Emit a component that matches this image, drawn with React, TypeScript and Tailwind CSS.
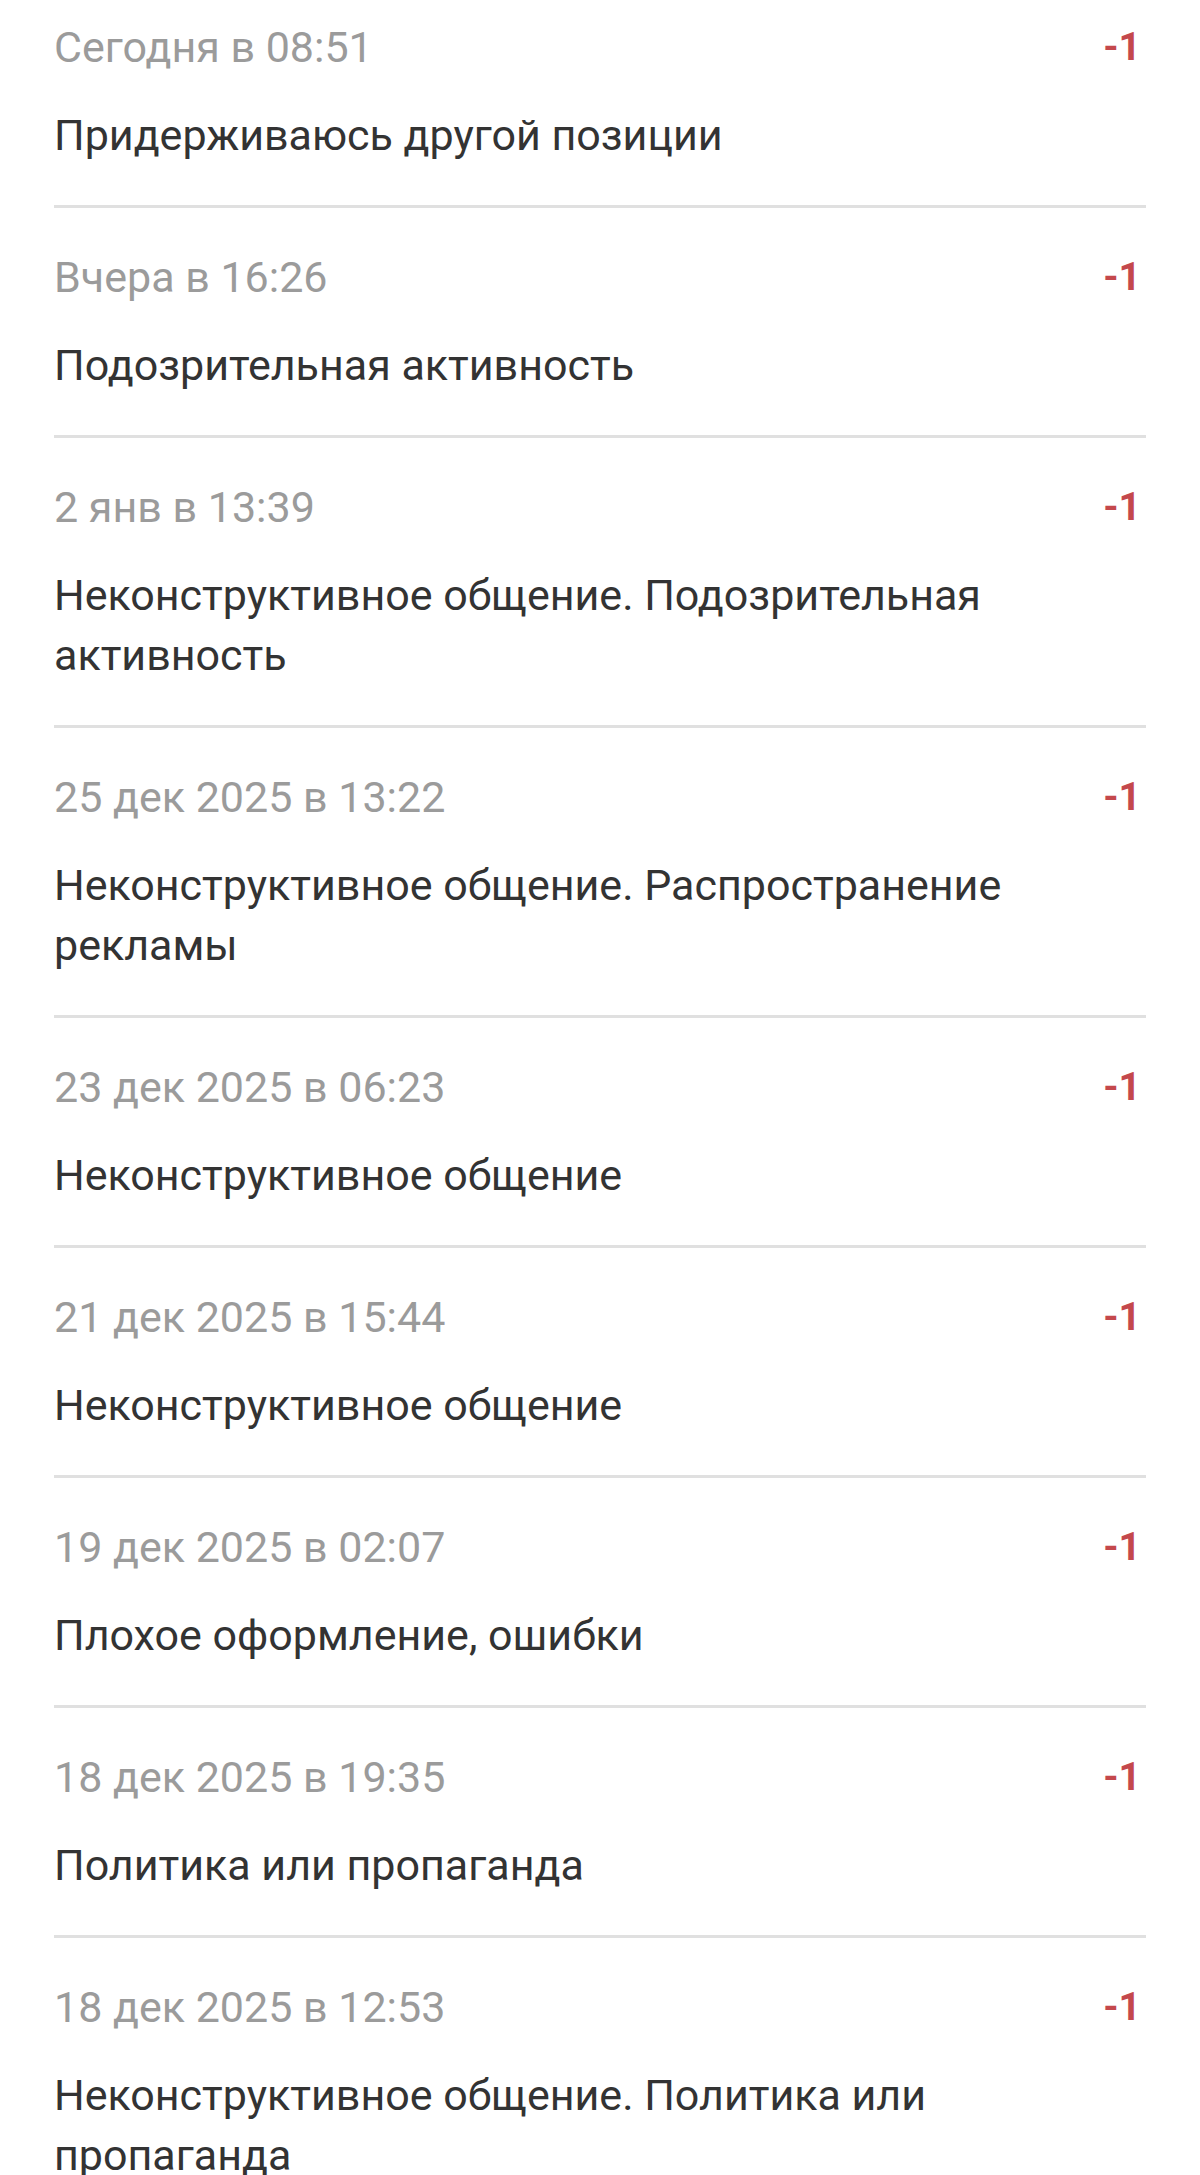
const entries = [
  { date: "Сегодня в 08:51", reason: "Придерживаюсь другой позиции" },
  { date: "Вчера в 16:26", reason: "Подозрительная активность" },
  { date: "2 янв в 13:39", reason: "Неконструктивное общение. Подозрительная активность" },
  { date: "25 дек 2025 в 13:22", reason: "Неконструктивное общение. Распространение рекламы" },
  { date: "23 дек 2025 в 06:23", reason: "Неконструктивное общение" },
  { date: "21 дек 2025 в 15:44", reason: "Неконструктивное общение" },
  { date: "19 дек 2025 в 02:07", reason: "Плохое оформление, ошибки" },
  { date: "18 дек 2025 в 19:35", reason: "Политика или пропаганда" },
  { date: "18 дек 2025 в 12:53", reason: "Неконструктивное общение. Политика или пропаганда" },
];

export default function App() {
  return (
    <div className="h-[2175px] overflow-hidden bg-white font-['Roboto',sans-serif]">
      <ul className="mx-[54px]">
        {entries.map((entry, index) => (
          <li
            key={index}
            className={`${index === 0 ? "pt-[25px]" : "pt-[47px]"} border-b-[3px] border-[#e0e0e0] pb-[40px]`}
          >
            <div className="flex items-center justify-between">
              <span className="text-[43px] leading-[44px] text-[#9b9b9b]">{entry.date}</span>
              <span className="pr-[5px] text-[39px] font-bold leading-[44px] text-[#c4484c]">-1</span>
            </div>
            <p className="mt-[36px] pr-[40px] text-[43px] leading-[60px] text-[#333333]">{entry.reason}</p>
          </li>
        ))}
      </ul>
    </div>
  );
}
